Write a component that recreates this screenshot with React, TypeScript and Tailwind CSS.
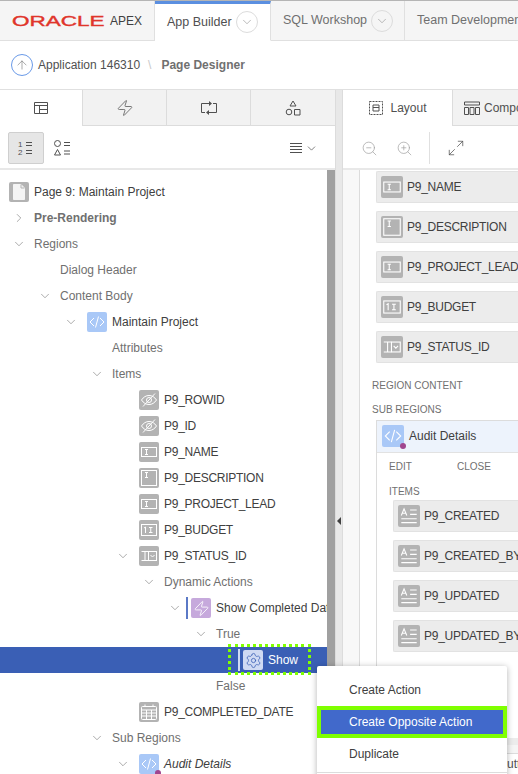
import { ChevronDown, ChevronRight, ArrowUp, Settings, Zap, ZoomIn, ZoomOut, Maximize2 } from "lucide-react";
import type { ReactNode } from "react";

type IconName = "page" | "code" | "hidden" | "text" | "area" | "number" | "select" | "date" | "bolt" | "gear" | "display";

type TreeRow = {
  label: string;
  level: number;
  chevron?: "down" | "right";
  icon?: IconName;
  marker?: boolean;
  tone?: "dark" | "muted" | "strong";
  italic?: boolean;
  selected?: boolean;
  dot?: boolean;
  item?: boolean;
};

const treeRows: TreeRow[] = [
  { label: "Page 9: Maintain Project", level: -1, icon: "page", tone: "dark" },
  { label: "Pre-Rendering", level: 0, chevron: "right", tone: "strong" },
  { label: "Regions", level: 0, chevron: "down" },
  { label: "Dialog Header", level: 1 },
  { label: "Content Body", level: 1, chevron: "down" },
  { label: "Maintain Project", level: 2, chevron: "down", icon: "code", tone: "dark" },
  { label: "Attributes", level: 3 },
  { label: "Items", level: 3, chevron: "down" },
  { label: "P9_ROWID", level: 4, icon: "hidden", tone: "dark", item: true },
  { label: "P9_ID", level: 4, icon: "hidden", tone: "dark", item: true },
  { label: "P9_NAME", level: 4, icon: "text", tone: "dark", item: true },
  { label: "P9_DESCRIPTION", level: 4, icon: "area", tone: "dark", item: true },
  { label: "P9_PROJECT_LEAD", level: 4, icon: "text", tone: "dark", item: true },
  { label: "P9_BUDGET", level: 4, icon: "number", tone: "dark", item: true },
  { label: "P9_STATUS_ID", level: 4, chevron: "down", icon: "select", tone: "dark", item: true },
  { label: "Dynamic Actions", level: 5, chevron: "down" },
  { label: "Show Completed Date", level: 6, chevron: "down", icon: "bolt", marker: true, tone: "dark" },
  { label: "True", level: 7, chevron: "down" },
  { label: "Show", level: 8, icon: "gear", marker: true, selected: true },
  { label: "False", level: 7 },
  { label: "P9_COMPLETED_DATE", level: 4, icon: "date", tone: "dark", item: true },
  { label: "Sub Regions", level: 3, chevron: "down" },
  { label: "Audit Details", level: 4, chevron: "down", icon: "code", tone: "dark", italic: true, dot: true },
];

function Glyph({ name }: { name: IconName }) {
  if (name === "gear") return <Settings size={17} strokeWidth={1.1} className="text-[#3a5fb5]" />;
  if (name === "bolt") return <Zap size={17} strokeWidth={1.2} className="text-white" />;
  return (
    <svg viewBox="0 0 20 20" className="h-full w-full" fill="none" stroke="#fff" strokeWidth="1">
      {name === "page" && (
        <path d="M4.500 2.500h7.500l3.500 3.500v11.500h-11z" fill="#f4f4f4" stroke="#f4f4f4" />
      )}
      {name === "page" && <path d="M12 2.500v3.500h3.500" stroke="#b3b3b3" />}
      {name === "code" && <path d="M7 6l-4 4 4 4M13 6l4 4-4 4M11.500 4.500l-3 11" />}
      {name === "hidden" && (
        <>
          <path d="M2.500 10c2-3 4.500-4.500 7.500-4.500s5.500 1.500 7.500 4.500c-2 3-4.500 4.500-7.500 4.500S4.500 13 2.500 10z" />
          <circle cx="10" cy="10" r="2.500" />
          <path d="M16 3.500L4 16.500" />
        </>
      )}
      {name === "text" && (
        <>
          <rect x="2.500" y="5.500" width="15" height="9" />
          <path d="M6 7.500h3M6 12.500h3M7.500 7.500v5" />
        </>
      )}
      {name === "area" && (
        <>
          <rect x="2.500" y="2.500" width="15" height="15" />
          <path d="M6 4.500h3M6 9.500h3M7.500 4.500v5" />
        </>
      )}
      {name === "number" && (
        <>
          <rect x="2.500" y="4.500" width="15" height="11" />
          <path d="M5 8l1.500-1v6M10 7.500h3.500M10 12.500h3.500M11.750 7.500v5" />
        </>
      )}
      {name === "select" && (
        <>
          <path d="M2.500 5.500h7M2.500 14.500h7M6 5.500v9" />
          <rect x="9.500" y="5.500" width="8" height="9" />
          <path d="M11.500 9l2 2 2-2" />
        </>
      )}
      {name === "date" && (
        <>
          <rect x="2.500" y="4.500" width="15" height="13" rx="1" />
          <path d="M2.500 8h15M2.500 11h15M2.500 14h15M7.500 8v9.500M12.500 8v9.500M6 2.500v2M14 2.500v2" />
        </>
      )}
      {name === "display" && (
        <path d="M3 9.500l2.500-6 2.500 6M4 7.500h3M11 4.500h6M11 8.500h6M3 12.500h14M3 16h14" />
      )}
    </svg>
  );
}

function ItemIcon({ name, size = "w-5 h-5", dot }: { name: IconName; size?: string; dot?: boolean }) {
  const bg =
    name === "code"
      ? "bg-[#a9c8f7]"
      : name === "bolt"
        ? "bg-[#c6a9dc]"
        : name === "gear"
          ? "bg-[#cfdaf3]"
          : "bg-[#b3b3b3]";
  return (
    <span className={`relative flex shrink-0 items-center justify-center rounded-[2px] ${size} ${bg}`}>
      <Glyph name={name} />
      {dot && <span className="absolute -bottom-[2px] -right-[2px] h-[6px] w-[6px] rounded-full bg-[#a0468f]" />}
    </span>
  );
}

function Row({ row }: { row: TreeRow }) {
  const text = row.selected
    ? "text-white"
    : row.tone === "dark"
      ? "text-[#404040]"
      : row.tone === "strong"
        ? "font-bold text-[#707070]"
        : "text-[#707070]";
  return (
    <div
      className={`flex h-[26px] shrink-0 items-center ${row.selected ? "bg-[#3a5fb5]" : ""}`}
      style={{ paddingLeft: row.level < 0 ? 9 : 11 + 26 * row.level }}
    >
      {row.level >= 0 && (
        <span className="flex w-4 shrink-0 justify-center text-[#707070]">
          {row.chevron === "down" && <ChevronDown size={14} strokeWidth={1} />}
          {row.chevron === "right" && <ChevronRight size={14} strokeWidth={1} />}
        </span>
      )}
      {row.icon ? (
        <span className={`relative mr-[5px] ${row.level >= 0 ? "ml-2" : ""}`}>
          {row.marker && (
            <span
              className={`absolute -left-[5px] -top-[1px] h-[22px] w-[2px] ${row.selected ? "bg-[#cfdaf3]" : "bg-[#5b79c6]"}`}
            />
          )}
          <ItemIcon name={row.icon} dot={row.dot} />
        </span>
      ) : (
        <span className="w-[7px] shrink-0" />
      )}
      <span
        className={`whitespace-nowrap text-[12px] ${row.item ? "tracking-[-0.27px]" : ""} ${row.italic ? "italic" : ""} ${text}`}
      >
        {row.label}
      </span>
    </div>
  );
}

function ItemCard({ name, icon, indent }: { name: string; icon: IconName; indent?: boolean }) {
  return (
    <div
      className={`flex h-8 shrink-0 items-center gap-1 rounded-l-[2px] border border-r-0 border-[#e2e2e2] bg-[#ececec] pl-1 ${indent ? "ml-4" : ""}`}
    >
      <ItemIcon name={icon} size="w-[22px] h-[22px]" />
      <span className="whitespace-nowrap text-[12px] tracking-[-0.27px] text-[#404040]">{name}</span>
    </div>
  );
}

function NavTab({ label, active, arrow, className }: { label: string; active?: boolean; arrow?: boolean; className: string }) {
  return (
    <div
      className={`flex shrink-0 items-center gap-1 border-b border-r border-[#e0e0e0] pl-3 ${active ? "border-b-white border-t-[3px] border-t-[#5b8fe0] bg-white text-[#505050]" : "bg-[#f5f5f5] text-[#707070]"} ${className}`}
    >
      <span className="whitespace-nowrap text-[12.500px]">{label}</span>
      {arrow && (
        <span className="flex h-[22px] w-[22px] items-center justify-center rounded-full border border-[#dcdcdc] text-[#8a8a8a]">
          <ChevronDown size={14} strokeWidth={1} />
        </span>
      )}
    </div>
  );
}

function PanelTab({ children, active, className }: { children: ReactNode; active?: boolean; className: string }) {
  return (
    <div
      className={`flex shrink-0 items-center justify-center border-[#dcdcdc] ${active ? "bg-white" : "border-b border-l bg-[#f2f2f2]"} ${className}`}
    >
      {children}
    </div>
  );
}

export default function App() {
  return (
    <div className="relative flex h-[774px] w-[518px] flex-col overflow-hidden bg-white font-['Liberation_Sans',Arial,sans-serif]">
      {/* top nav */}
      <header className="flex h-[41px] shrink-0 border-t border-[#b5b5b5]">
        <div className="flex h-10 w-[155px] shrink-0 items-center border-b border-r border-[#e0e0e0] bg-[#f5f5f5] pl-3">
          <span className="w-[93px] shrink-0 origin-left scale-x-[1.5] whitespace-nowrap text-[15px] leading-none text-[#e0352b] [-webkit-text-stroke:0.4px_#e0352b]">
            ORACLE
          </span>
          <span className="ml-[5px] text-[12px] text-[#404040]">APEX</span>
        </div>
        <NavTab label="App Builder" active arrow className="h-10 w-[116px]" />
        <NavTab label="SQL Workshop" arrow className="h-10 w-[134px]" />
        <NavTab label="Team Development" className="h-10 w-[140px]" />
      </header>

      {/* breadcrumb */}
      <div className="flex h-[49px] shrink-0 items-center border-b border-[#e0e0e0] pl-[11px]">
        <span className="flex h-[22px] w-[22px] items-center justify-center rounded-full border border-[#6a9ae8] text-[#707070]">
          <ArrowUp size={14} strokeWidth={1} />
        </span>
        <span className="ml-[5px] text-[12px] text-[#505050]">Application 146310</span>
        <span className="ml-2 text-[12px] text-[#c8c8c8]">\</span>
        <span className="ml-[10px] text-[12px] font-bold text-[#707070]">Page Designer</span>
      </div>

      <div className="flex min-h-0 flex-1">
        {/* left panel */}
        <section className="flex w-[336px] shrink-0 flex-col border-r border-[#dcdcdc]">
          <div className="flex h-9 shrink-0">
            <PanelTab active className="w-[82px]">
              <svg width="16" height="14" viewBox="0 0 16 14" fill="none" stroke="#505050">
                <path d="M1.500 1.500h13v11h-13zM1.500 4.500h13M6.500 4.500v8M6.500 8.500h8" />
              </svg>
            </PanelTab>
            <PanelTab className="w-[84px]">
              <Zap size={18} strokeWidth={1} className="text-[#505050]" />
            </PanelTab>
            <PanelTab className="w-[84px]">
              <svg width="18" height="16" viewBox="0 0 18 16" fill="none" stroke="#505050">
                <path d="M9 3.500H1.500v9H5M9 12.500h7.500v-9H13" />
                <path d="M9 1l3 2.500L9 6zM9 10l-3 2.500L9 15z" fill="#505050" stroke="none" />
              </svg>
            </PanelTab>
            <PanelTab className="w-[85px]">
              <svg width="16" height="16" viewBox="0 0 16 16" fill="none" stroke="#505050">
                <path d="M8 1l3 5H5z" />
                <circle cx="4" cy="12" r="2.800" />
                <path d="M9.500 9.500h5.500v5.500H9.500z" />
              </svg>
            </PanelTab>
          </div>
          <div className="flex h-[44px] shrink-0 items-center border-b-2 border-[#e8e8e8] pl-2 pr-[17px] pt-[2px]">
            <div className="flex h-8 w-9 items-center justify-center rounded-[2px] border border-[#cfcfcf] bg-[#e6e6e6]">
              <svg width="18" height="18" viewBox="0 0 18 18" fill="none" stroke="#505050">
                <text x="1" y="7.500" fontSize="8" fill="#505050" stroke="none">1</text>
                <text x="1" y="16" fontSize="8" fill="#505050" stroke="none">2</text>
                <path d="M9 3.500h6M9 6.500h6M9 11.500h6M9 14.500h6" />
              </svg>
            </div>
            <svg width="18" height="18" viewBox="0 0 18 18" fill="none" stroke="#505050" className="ml-[9px]">
              <circle cx="4.500" cy="4.500" r="3" />
              <path d="M4.500 10.500l3 5.500h-6zM11 3.500h6M11 6.500h6M11 12h6M11 15h6" />
            </svg>
            <svg width="14" height="12" viewBox="0 0 14 12" stroke="#505050" className="ml-auto">
              <path d="M1 1.500h12M1 4.500h12M1 7.500h12M1 10.500h12" />
            </svg>
            <ChevronDown size={13} strokeWidth={1.2} className="ml-[2px] text-[#404040]" />
          </div>
          <div className="flex min-h-0 flex-1">
            <div className="flex min-w-0 flex-1 flex-col overflow-hidden pt-[9px]">
              {treeRows.map((row) => (
                <Row key={row.label + row.level} row={row} />
              ))}
            </div>
            <div className="w-2 shrink-0 bg-[#a0a0a0]" />
          </div>
        </section>

        {/* splitter */}
        <div className="flex w-[7px] shrink-0 items-center justify-center border-r border-[#dcdcdc] bg-[#e8e8e8] pt-[178px]">
          <span className="h-0 w-0 border-y-[4px] border-r-[4px] border-y-transparent border-r-[#404040]" />
        </div>

        {/* right panel */}
        <section className="flex min-w-0 flex-1 flex-col">
          <div className="flex h-9 shrink-0">
            <PanelTab active className="w-[109px] gap-[6px]">
              <svg width="16" height="16" viewBox="0 0 16 16" fill="none" stroke="#505050">
                <rect x="1.500" y="1.500" width="13" height="13" strokeDasharray="2 1" />
                <path d="M5 5h6v6H5zM5 7.500h6" />
              </svg>
              <span className="text-[12px] text-[#505050]">Layout</span>
            </PanelTab>
            <PanelTab className="w-[66px] justify-start gap-1 overflow-hidden pl-[11px]">
              <svg width="16" height="14" viewBox="0 0 16 14" fill="none" stroke="#505050" className="shrink-0">
                <path d="M.5 1h15v3H.5zM.5 6.500h4v7h-4zM6 6.500h4v7H6zM11.500 6.500h4v7h-4z" />
              </svg>
              <span className="whitespace-nowrap text-[12px] text-[#505050]">Components</span>
            </PanelTab>
          </div>
          <div className="flex h-[44px] shrink-0 items-center border-b-2 border-[#e8e8e8] pl-[18px] pt-[2px] text-[#a0a0a0]">
            <ZoomOut size={17} strokeWidth={1} />
            <ZoomIn size={17} strokeWidth={1} className="ml-[18px]" />
            <span className="ml-4 h-8 w-px bg-[#e0e0e0]" />
            <Maximize2 size={18} strokeWidth={1} className="ml-[17px] text-[#505050]" />
          </div>
          <div className="flex min-h-0 flex-1">
            <div className="w-[17px] shrink-0 border-r border-[#dcdcdc] bg-[#f8f8f8]" />
            <div className="flex min-w-0 flex-1 flex-col overflow-hidden pl-4 pt-px">
              <div className="flex flex-col gap-2">
                <ItemCard name="P9_NAME" icon="text" />
                <ItemCard name="P9_DESCRIPTION" icon="area" />
                <ItemCard name="P9_PROJECT_LEAD" icon="text" />
                <ItemCard name="P9_BUDGET" icon="number" />
                <ItemCard name="P9_STATUS_ID" icon="select" />
              </div>
              <p className="-ml-1 mt-[17px] text-[10px] leading-[12px] text-[#707070]">REGION CONTENT</p>
              <p className="-ml-1 mt-3 text-[10px] leading-[12px] text-[#707070]">SUB REGIONS</p>
              <div className="mt-1 flex flex-1 flex-col border-l border-t border-[#dcdcdc]">
                <div className="flex h-8 shrink-0 items-center gap-[5px] border-b border-[#e2e2e2] bg-[#edf3fc] pb-px pl-[5px]">
                  <ItemIcon name="code" size="w-[22px] h-[22px]" dot />
                  <span className="whitespace-nowrap text-[12px] text-[#404040]">Audit Details</span>
                </div>
                <div className="flex pl-3 pt-2 text-[10px] leading-[12px] text-[#707070]">
                  <span className="w-[68px]">EDIT</span>
                  <span>CLOSE</span>
                </div>
                <p className="pl-3 pt-[13px] text-[10px] leading-[12px] text-[#707070]">ITEMS</p>
                <div className="flex flex-col gap-2 pt-[2px]">
                  <ItemCard name="P9_CREATED" icon="display" indent />
                  <ItemCard name="P9_CREATED_BY" icon="display" indent />
                  <ItemCard name="P9_UPDATED" icon="display" indent />
                  <ItemCard name="P9_UPDATED_BY" icon="display" indent />
                </div>
              </div>
            </div>
          </div>
          <div className="h-[7px] shrink-0 bg-[#ececec]" />
          <div className="h-[9px] shrink-0 border-b border-[#dcdcdc] bg-[#f5f5f5]" />
          <div className="flex h-[20px] shrink-0 items-center pl-[156px] text-[12px] text-[#505050]">
            <span className="whitespace-nowrap">Buttons</span>
          </div>
        </section>
      </div>

      {/* green annotation round the selected node */}
      <div className="absolute left-[228px] top-[644px] h-[31px] w-[83px] border-[3px] border-dotted border-[#7fff00]" />

      {/* context menu */}
      <div className="absolute left-[317px] top-[666px] h-[120px] w-[190px] rounded-[2px] bg-white pt-2 shadow-[0_1px_6px_rgba(0,0,0,0.3)]">
        <div className="flex h-8 items-center pl-8 text-[12px] text-[#404040]">Create Action</div>
        <div className="flex h-8 items-center border-[4px] border-[#7fff00] bg-[#4169cb] pl-7 text-[12px] text-white">
          Create Opposite Action
        </div>
        <div className="flex h-8 items-center pl-8 text-[12px] text-[#404040]">Duplicate</div>
        <div className="mt-[2px] border-t border-[#dcdcdc]" />
      </div>
    </div>
  );
}
